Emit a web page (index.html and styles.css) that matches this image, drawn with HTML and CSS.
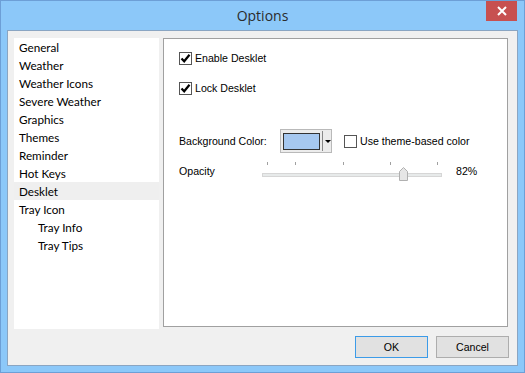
FILE: index.html
```html
<!DOCTYPE html>
<html lang="en">
<head>
    <meta charset="UTF-8">
    <meta name="viewport" content="width=device-width, initial-scale=1.0">
    <title>Options</title>
    <link rel="stylesheet" href="styles.css">
</head>
<body>
    <div class="window">
        <div class="titlebar">
            <span class="title">Options</span>
            <div class="close">
                <svg width="10" height="10" viewBox="0 0 10 10">
                    <path d="M1 1 L9 9 M9 1 L1 9" stroke="#fff" stroke-width="2"/>
                </svg>
            </div>
        </div>
        <div class="client">
            <div class="main">
                <ul class="list">
                    <li>General</li>
                    <li>Weather</li>
                    <li>Weather Icons</li>
                    <li>Severe Weather</li>
                    <li>Graphics</li>
                    <li>Themes</li>
                    <li>Reminder</li>
                    <li>Hot Keys</li>
                    <li class="selected">Desklet</li>
                    <li>Tray Icon</li>
                    <li class="sub">Tray Info</li>
                    <li class="sub">Tray Tips</li>
                </ul>
                <div class="panel">
                    <div class="row row-first">
                        <span class="check checked">
                            <svg width="11" height="11" viewBox="0 0 11 11">
                                <path d="M1.5 5.5 L4.2 8.3 L9.5 1.8" fill="none" stroke="#000" stroke-width="2.2"/>
                            </svg>
                        </span>
                        <span class="label">Enable Desklet</span>
                    </div>
                    <div class="row row-second">
                        <span class="check checked">
                            <svg width="11" height="11" viewBox="0 0 11 11">
                                <path d="M1.5 5.5 L4.2 8.3 L9.5 1.8" fill="none" stroke="#000" stroke-width="2.2"/>
                            </svg>
                        </span>
                        <span class="label">Lock Desklet</span>
                    </div>
                    <div class="row row-color">
                        <span class="field-name">Background Color:</span>
                        <div class="color-combo">
                            <div class="swatch"></div>
                            <div class="combo-sep"></div>
                            <div class="combo-arrow"></div>
                        </div>
                        <span class="check"></span>
                        <span class="label">Use theme-based color</span>
                    </div>
                    <div class="row row-opacity">
                        <span class="field-name opacity-name">Opacity</span>
                        <div class="slider">
                            <span class="tick" style="left: 5px"></span>
                            <span class="tick" style="left: 33px"></span>
                            <span class="tick" style="left: 81px"></span>
                            <span class="tick" style="left: 128px"></span>
                            <span class="tick" style="left: 175px"></span>
                            <div class="track"></div>
                            <svg class="thumb" width="9" height="14" viewBox="0 0 9 14">
                                <path d="M0.5 13.5 L0.5 4.5 L4.5 0.5 L8.5 4.5 L8.5 13.5 Z" fill="#e6e6e6" stroke="#b0b0b0"/>
                            </svg>
                        </div>
                        <span class="value">82%</span>
                    </div>
                </div>
            </div>
            <div class="footer">
                <div class="btn default">OK</div>
                <div class="btn">Cancel</div>
            </div>
        </div>
    </div>
</body>
</html>
```

FILE: styles.css
```css
body {
    margin: 0;
    font-family: 'Liberation Sans', Arial, sans-serif;
    font-size: 10.6px;
    color: #000;
}
.window {
    width: 525px;
    height: 373px;
    box-sizing: border-box;
    border: 1px solid #6d9fd6;
    background-color: #8cc8f9;
    display: flex;
    flex-direction: column;
}
.titlebar {
    height: 29px;
    position: relative;
    text-align: center;
    flex-shrink: 0;
}
.title {
    font-family: 'Open Sans', sans-serif;
    font-size: 14px;
    line-height: 29px;
    color: #2b2b2b;
}
.close {
    position: absolute;
    top: 0;
    right: 7px;
    width: 31px;
    height: 20px;
    background-color: #c75050;
    display: flex;
    align-items: center;
    justify-content: center;
}
.client {
    margin: 0 6px 6px 6px;
    flex: 1;
    border: 1px solid #8aa5c2;
    background-color: #f0f0f0;
    padding: 7px 0 0 6px;
}
.main {
    display: flex;
    align-items: flex-start;
    height: 291px;
}
.list {
    list-style: none;
    margin: 0;
    padding: 0;
    width: 145px;
    height: 291px;
    background-color: #fff;
    font-family: 'Lato', sans-serif;
    font-size: 11.7px;
}
.list li {
    height: 18px;
    line-height: 18px;
    padding-left: 5px;
}
.list li.selected {
    background-color: #efefef;
}
.list li.sub {
    padding-left: 24px;
}
.panel {
    margin-left: 4px;
    width: 345px;
    height: 289px;
    box-sizing: border-box;
    border: 1px solid #a0a0a0;
    background-color: #fff;
    padding: 11px 0 0 15px;
}
.row {
    display: flex;
    align-items: center;
}
.row-first {
    height: 16px;
}
.row-second {
    height: 16px;
    margin-top: 14px;
}
.row-color {
    height: 24px;
    margin-top: 33px;
}
.row-opacity {
    height: 22px;
    margin-top: 7px;
}
.check {
    width: 13px;
    height: 13px;
    box-sizing: border-box;
    border: 1px solid #555;
    background-color: #fff;
    display: flex;
    align-items: center;
    justify-content: center;
    flex-shrink: 0;
}
.label {
    margin-left: 3px;
}
.field-name {
    width: 101px;
    flex-shrink: 0;
}
.opacity-name {
    width: 83px;
}
.color-combo {
    width: 52px;
    height: 24px;
    box-sizing: border-box;
    border: 1px solid #b9b9b9;
    background-color: #ececec;
    display: flex;
    align-items: center;
    padding-left: 2px;
    margin-right: 12px;
}
.swatch {
    width: 38px;
    height: 17px;
    box-sizing: border-box;
    border: 1px solid #333;
    background-color: #a6c8f0;
}
.combo-sep {
    width: 1px;
    height: 20px;
    background-color: #888;
    margin-left: 2px;
}
.combo-arrow {
    margin-left: 2px;
    width: 0;
    height: 0;
    border-left: 3px solid transparent;
    border-right: 3px solid transparent;
    border-top: 3px solid #000;
}
.slider {
    position: relative;
    width: 180px;
    height: 22px;
}
.tick {
    position: absolute;
    top: 2px;
    width: 1px;
    height: 3px;
    background-color: #a0a0a0;
}
.track {
    position: absolute;
    left: 0;
    top: 13px;
    width: 180px;
    height: 4px;
    box-sizing: border-box;
    border: 1px solid #d6d6d6;
    background-color: #e7eaea;
}
.thumb {
    position: absolute;
    left: 137px;
    top: 7px;
}
.value {
    margin-left: 14px;
}
.footer {
    display: flex;
    justify-content: flex-end;
    gap: 8px;
    margin-top: 7px;
    padding-right: 8px;
}
.btn {
    width: 73px;
    height: 22px;
    box-sizing: border-box;
    border: 1px solid #adadad;
    background-color: #e1e1e1;
    display: flex;
    align-items: center;
    justify-content: center;
}
.btn.default {
    border-color: #3c9be8;
}
```
